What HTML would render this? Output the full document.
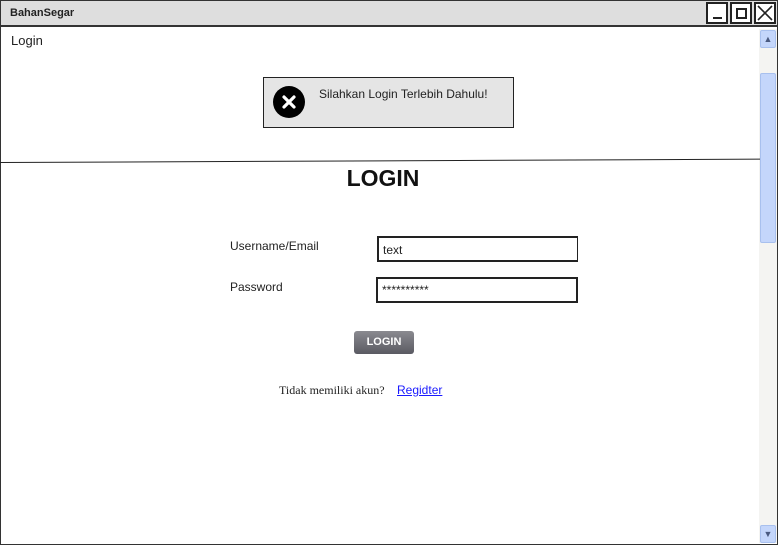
<!DOCTYPE html>
<html><head><meta charset="utf-8"><style>
*{margin:0;padding:0;box-sizing:border-box}
body{width:778px;height:545px;position:relative;background:#fff;font-family:"Liberation Sans",sans-serif;overflow:hidden;color:#222}
.a{position:absolute}
</style></head><body>
<div class="a" style="left:0;top:0;width:778px;height:545px;border:1px solid #333;"></div>
<div class="a" style="left:0;top:0;width:778px;height:27px;background:#dedede;border:1px solid #333;border-bottom:2px solid #333"></div>
<div class="a" style="left:10px;top:7px;font-size:11px;font-weight:bold">BahanSegar</div>
<div class="a" style="left:706px;top:2px;width:22px;height:22px;border:2px solid #222;background:#fff"><div class="a" style="left:5px;top:13px;width:9px;height:2px;background:#222"></div></div>
<div class="a" style="left:730px;top:2px;width:22px;height:22px;border:2px solid #222;background:#fff"><div class="a" style="left:4px;top:4px;width:11px;height:11px;border:2px solid #222"></div></div>
<div class="a" style="left:754px;top:2px;width:22px;height:22px;border:2px solid #222;background:#fff">
<svg class="a" style="left:1px;top:1px" width="16" height="16"><path d="M1 1L15 15M15 1L1 15" stroke="#222" stroke-width="1.6"/></svg></div>
<div class="a" style="left:11px;top:33px;font-size:13px">Login</div>
<!-- scrollbar -->
<div class="a" style="left:759px;top:29px;width:18px;height:514px;background:#f4f4f2"></div>
<div class="a" style="left:760px;top:30px;width:16px;height:18px;background:#c4d6fb;border:1px solid #a8c0ee;border-radius:2px;font-size:9px;text-align:center;color:#4a5a80;line-height:16px">▲</div>
<div class="a" style="left:760px;top:73px;width:16px;height:170px;background:#c4d6fb;border:1px solid #a8c0ee;border-radius:2px"></div>
<div class="a" style="left:760px;top:525px;width:16px;height:18px;background:#c4d6fb;border:1px solid #a8c0ee;border-radius:2px;font-size:9px;text-align:center;color:#4a5a80;line-height:16px">▼</div>
<!-- alert -->
<div class="a" style="left:263px;top:77px;width:251px;height:51px;background:#e5e5e5;border:1px solid #222"></div>
<div class="a" style="left:273px;top:86px;width:32px;height:32px;border-radius:50%;background:#000"></div>
<svg class="a" style="left:282px;top:95px" width="14" height="14"><path d="M2 2L12 12M12 2L2 12" stroke="#fff" stroke-width="3.2" stroke-linecap="round"/></svg>
<div class="a" style="left:319px;top:87px;font-size:12px">Silahkan Login Terlebih Dahulu!</div>
<div class="a" style="left:0;top:162px;width:760px;height:0;border-top:1.5px solid #222;transform:rotate(-0.25deg);transform-origin:left"></div>
<div class="a" style="left:0;top:165px;width:766px;text-align:center;font-size:23px;font-weight:bold;color:#111">LOGIN</div>
<div class="a" style="left:230px;top:239px;font-size:12px">Username/Email</div>
<div class="a" style="left:230px;top:280px;font-size:12px">Password</div>
<div class="a" style="left:377px;top:236px;width:201px;height:26px;border:2px solid #222;border-right-width:1.5px;font-size:12px;padding:5px 4px">text</div>
<div class="a" style="left:376px;top:277px;width:202px;height:26px;border:2px solid #222;font-size:12px;padding:4px 4px">**********</div>
<div class="a" style="left:354px;top:331px;width:60px;height:23px;border-radius:3px;background:linear-gradient(#8a8a90,#5a5a62);color:#fff;font-size:11px;font-weight:bold;text-align:center;line-height:23px">LOGIN</div>
<div class="a" style="left:279px;top:383px;font-family:'Liberation Serif',serif;font-size:12px">Tidak memiliki akun?</div>
<div class="a" style="left:397px;top:383px;font-size:12px;color:#1a1aff;text-decoration:underline">Regidter</div>
</body></html>
